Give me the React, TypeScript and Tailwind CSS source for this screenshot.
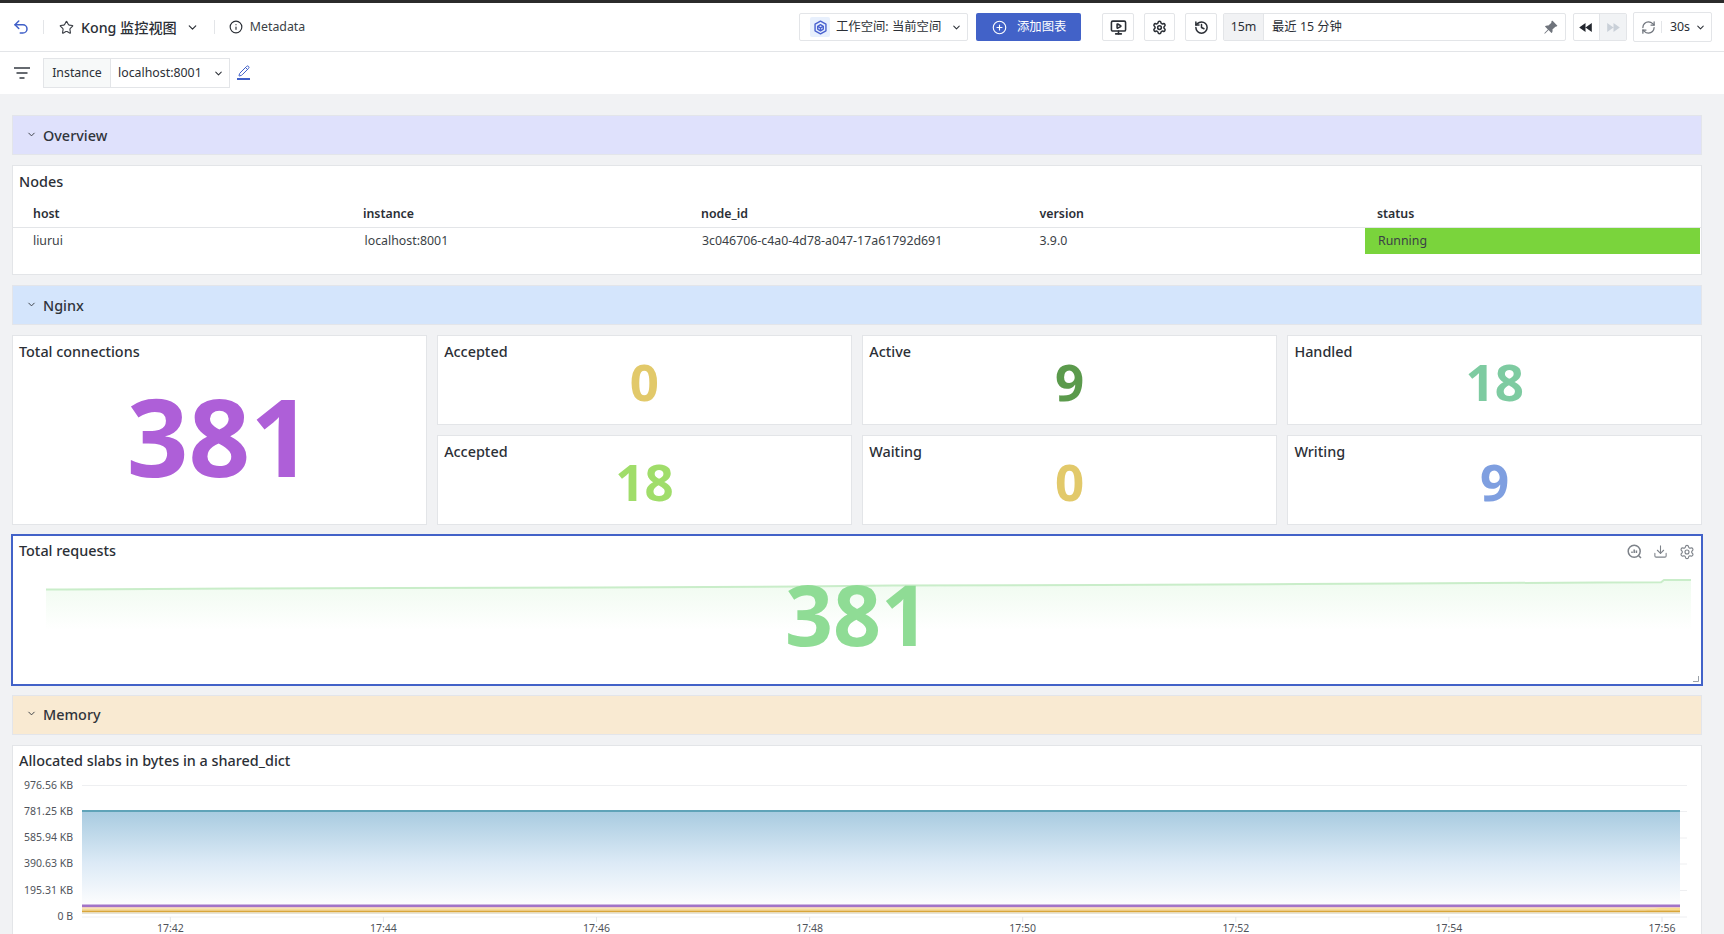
import { ChevronDown, CirclePlus, Download, History, Info, MonitorPlay, Pencil, RefreshCw, Settings, Star, Undo2 } from "lucide-react";
import { BsPinAngleFill } from "react-icons/bs";

const Section = ({ title, color, top }: { title: string; color: string; top: string }) => (
  <div className={`${color} ${top} h-[40px] shrink-0 border border-[#e3e5ea] flex items-center`}>
    <ChevronDown size={11} strokeWidth={2} className="ml-[13px] mb-[2px] text-[#30343b]" />
    <span className="ml-[6px] text-[14.4px] font-medium text-[#30343b]">{title}</span>
  </div>
);

const Stat = ({ title, value, color }: { title: string; value: string; color: string }) => (
  <div className="bg-white border border-[#e3e5e8] pt-[5.5px] pl-[6px]">
    <div className="text-[14.4px] leading-[20px] font-medium text-[#2b2f36]">{title}</div>
    <div className={`${color} -ml-[6px] -mt-[6.5px] text-center text-[51px] leading-[53px] font-bold`}>{value}</div>
  </div>
);

const ticks = [170.3, 383.4, 596.5, 809.6, 1022.7, 1235.8, 1448.9, 1662];
const times = ["17:42", "17:44", "17:46", "17:48", "17:50", "17:52", "17:54", "17:56"];
const yAxis = [
  ["976.56 KB", 786.5],
  ["781.25 KB", 812.5],
  ["585.94 KB", 839],
  ["390.63 KB", 865],
  ["195.31 KB", 891.5],
  ["0 B", 918],
] as const;

export default function App() {
  return (
    <div className="h-screen w-full overflow-hidden flex flex-col bg-[#f1f2f4] font-['Noto_Sans','Noto_Sans_CJK_SC',sans-serif] text-[#2b2f36]">
      <div className="h-[3px] shrink-0 bg-[#2b2b2b]" />
      <header className="h-[49px] shrink-0 bg-white border-b border-[#e3e5e8] flex items-center">
        <Undo2 size={18} strokeWidth={2} className="ml-[12px] text-[#3f5fc8]" />
        <div className="ml-[13px] h-[14px] w-px bg-[#e3e5e8]" />
        <Star size={15} strokeWidth={1.8} className="ml-[15px] text-[#3b3f46]" />
        <span className="ml-[7px] mt-px text-[14.2px] font-medium">Kong 监控视图</span>
        <ChevronDown size={13} strokeWidth={2.2} className="ml-[9px]" />
        <div className="ml-[15px] h-[14px] w-px bg-[#e3e5e8]" />
        <Info size={14} strokeWidth={2} className="ml-[14px]" />
        <span className="ml-[7px] text-[12.35px] text-[#3b3f46]">Metadata</span>

        <div className="ml-auto w-[169px] h-[28px] border border-[#e3e5e8] rounded-[2px] flex items-center">
          <div className="ml-[10px] w-[20px] h-[20px] bg-[#e8f0fd] rounded-[2px] flex items-center justify-center">
            <svg width="15" height="15" viewBox="0 0 16 16" fill="none" stroke="#4a62d0" strokeWidth="1.5" strokeLinejoin="round">
              <path d="M8 1.2l5.8 3.3v7L8 14.8l-5.8-3.3v-7z" />
              <path d="M8 5l3 1.7v3L8 11.5 5 9.7v-3z" />
              <path d="M8 8.4V11.5M5 6.7l3 1.7 3-1.7" />
            </svg>
          </div>
          <span className="ml-[6px] text-[12.35px] whitespace-nowrap">工作空间: 当前空间</span>
          <ChevronDown size={11} strokeWidth={2.2} className="ml-auto mr-[5px]" />
        </div>
        <div className="ml-[8px] w-[105px] h-[28px] bg-[#4262c8] rounded-[2px] flex items-center text-white">
          <CirclePlus size={15} strokeWidth={1.8} className="ml-[16px]" />
          <span className="ml-[10px] text-[12.35px]">添加图表</span>
        </div>
        <div className="ml-[21px] w-[32px] h-[28px] border border-[#e3e5e8] rounded-[2px] flex items-center justify-center">
          <MonitorPlay size={17} strokeWidth={2.2} />
        </div>
        <div className="ml-[10px] w-[31px] h-[28px] border border-[#e3e5e8] rounded-[2px] flex items-center justify-center">
          <Settings size={15} strokeWidth={2.4} />
        </div>
        <div className="ml-[10px] w-[32px] h-[28px] border border-[#e3e5e8] rounded-[2px] flex items-center justify-center">
          <History size={15} strokeWidth={2.4} />
        </div>
        <div className="ml-[6px] w-[343px] h-[28px] border border-[#e3e5e8] rounded-[2px] flex items-center">
          <div className="w-[40px] h-full bg-[#f1f2f4] border-r border-[#e3e5e8] flex items-center justify-center text-[12.35px]">15m</div>
          <span className="ml-[8px] text-[12.35px]">最近 15 分钟</span>
          <BsPinAngleFill size={15} className="ml-auto mr-[7px] text-[#6f747c]" />
        </div>
        <div className="ml-[7px] w-[54px] h-[28px] border border-[#e3e5e8] rounded-[2px] flex items-center">
          <div className="w-[26px] h-full flex items-center justify-center border-r border-[#e3e5e8]">
            <svg width="13" height="9" viewBox="0 0 14 10" fill="#23272e" className="mr-[2px]"><path d="M7 0v10L0 5zM14 0v10L7 5z" /></svg>
          </div>
          <div className="flex-1 h-full bg-[#f1f3f5] flex items-center justify-center">
            <svg width="13" height="9" viewBox="0 0 14 10" fill="#c9d0d8"><path d="M0 0v10l7-5zM7 0v10l7-5z" /></svg>
          </div>
        </div>
        <div className="ml-[6px] mr-[12px] w-[79px] h-[30px] border border-[#e3e5e8] rounded-[2px] flex items-center">
          <RefreshCw size={15} strokeWidth={2} className="ml-[7px] text-[#6f747c]" />
          <div className="ml-[5px] h-[12px] w-px bg-[#e3e5e8]" />
          <span className="ml-[8px] text-[12.35px]">30s</span>
          <ChevronDown size={11} strokeWidth={2.2} className="ml-[5px]" />
        </div>
      </header>

      <div className="h-[42px] shrink-0 bg-white flex items-center">
        <svg width="16" height="13" viewBox="0 0 16 13" fill="#666a70" className="ml-[14px]">
          <rect x="0" y="0" width="16" height="2" /><rect x="2.5" y="5" width="11" height="2" /><rect x="5.5" y="10" width="5" height="2" />
        </svg>
        <div className="ml-[13px] w-[187px] h-[30px] border border-[#e3e5e8] flex items-center text-[12.35px]">
          <div className="w-[67px] h-full bg-[#f7f9f9] border-r border-[#e3e5e8] flex items-center justify-center">Instance</div>
          <span className="ml-[7px]">localhost:8001</span>
          <ChevronDown size={11} strokeWidth={2.2} className="ml-auto mr-[5px]" />
        </div>
        <div className="ml-[7px] mb-[1px] flex flex-col items-center text-[#3f5fc8]">
          <Pencil size={12} strokeWidth={2} />
          <div className="mt-px w-[13px] h-[1.5px] bg-[#3f5fc8]" />
        </div>
      </div>

      <main className="flex-1 min-h-0 overflow-hidden flex flex-col pl-[12px] pr-[22px] pt-[21px]">
        <Section title="Overview" color="bg-[#dfe1fc]" top="pt-px" />
        <div className="mt-[10px] h-[110px] shrink-0 bg-white border border-[#e3e5e8]">
          <div className="pt-[6px] pl-[6px] text-[14.4px] leading-[20px] font-medium">Nodes</div>
          <div className="mt-[9px] grid grid-cols-[339.5px_337.5px_337.5px_337.5px_1fr] text-[12.35px]">
            <div className="h-[27px] flex items-center font-semibold pl-[20px] border-b border-[#e3e5e8]">host</div>
            <div className="h-[27px] flex items-center font-semibold pl-[10.5px] border-b border-[#e3e5e8]">instance</div>
            <div className="h-[27px] flex items-center font-semibold pl-[11px] border-b border-[#e3e5e8]">node_id</div>
            <div className="h-[27px] flex items-center font-semibold pl-[12px] border-b border-[#e3e5e8]">version</div>
            <div className="h-[27px] flex items-center font-semibold pl-[12px] border-b border-[#e3e5e8]">status</div>
            <div className="h-[26px] pt-px flex items-center pl-[20px] text-[#3b3f46]">liurui</div>
            <div className="h-[26px] pt-px flex items-center pl-[12px] text-[#3b3f46]">localhost:8001</div>
            <div className="h-[26px] pt-px flex items-center pl-[12px] text-[#3b3f46]">3c046706-c4a0-4d78-a047-17a61792d691</div>
            <div className="h-[26px] pt-px flex items-center pl-[12px] text-[#3b3f46]">3.9.0</div>
            <div className="h-[26px] pt-px mr-px flex items-center pl-[13px] text-[#3b3f46] bg-[#7ad43c]">Running</div>
          </div>
        </div>
        <Section title="Nginx" color="bg-[#d4e5fc]" top="mt-[10px] pt-px" />
        <div className="mt-[10px] shrink-0 grid grid-cols-4 grid-rows-[89.5px_89.5px] gap-[10.5px]">
          <div className="row-span-2 bg-white border border-[#e3e5e8] pt-[5.5px] pl-[6px]">
            <div className="text-[14.4px] leading-[20px] font-medium">Total connections</div>
            <div className="-ml-[6px] mt-[19px] text-center text-[108px] leading-[109px] font-bold text-[#ae5fd8]">381</div>
          </div>
          <Stat title="Accepted" value="0" color="text-[#e2c96a]" />
          <Stat title="Active" value="9" color="text-[#5b9a4c]" />
          <Stat title="Handled" value="18" color="text-[#7ecba1]" />
          <Stat title="Accepted" value="18" color="text-[#a0dd6a]" />
          <Stat title="Waiting" value="0" color="text-[#e2c96a]" />
          <Stat title="Writing" value="9" color="text-[#7f9fe0]" />
        </div>
        <div className="relative -mx-px mt-[9.5px] h-[152px] shrink-0 bg-white border-2 border-[#4262c8]">
          <svg className="absolute inset-0 w-full h-full" viewBox="13 536 1689 148" preserveAspectRatio="none">
            <defs>
              <linearGradient id="sparkFill" x1="0" y1="0" x2="0" y2="1">
                <stop offset="0" stopColor="#effbef" />
                <stop offset="1" stopColor="#ffffff" />
              </linearGradient>
            </defs>
            <path d="M46 589.5H65L240 588.5 400 588 600 587.5 800 586.5 893 585.5 1100 585 1300 584 1400 583.5 1600 582.5 1662 582.3 1665 580H1692V630H46Z" fill="url(#sparkFill)" />
            <path d="M46 589.5H65L240 588.5 400 588 600 587.5 800 586.5 893 585.5 1100 585 1300 584 1400 583.5 1600 582.5 1662 582.3 1665 580H1692" fill="none" stroke="#c9edc9" strokeWidth="2" />
          </svg>
          <div className="relative pt-[5px] pl-[6px] text-[14.4px] leading-[20px] font-medium">Total requests</div>
          <div className="relative mt-[10px] text-center text-[84px] leading-[85px] font-bold text-[#8fdc95]">381</div>
          <div className="absolute top-[7.5px] right-[6px] flex items-center gap-[11px] text-[#7d8289]">
            <svg width="15" height="15" viewBox="0 0 15 15" fill="none" stroke="currentColor" strokeWidth="1.5">
              <circle cx="7.2" cy="7.2" r="6" />
              <path d="M11.5 11.5l2.5 2.5" />
              <path d="M5 9V7.5M7.2 9V5.5M9.4 9V6.5" />
            </svg>
            <Download size={15} strokeWidth={1.7} />
            <Settings size={16} strokeWidth={1.7} />
          </div>
          <svg className="absolute right-[2px] bottom-[2px]" width="6" height="6" viewBox="0 0 6 6" fill="none" stroke="#9aa0a8" strokeWidth="1">
            <path d="M5.5 0v5.5H0" />
          </svg>
        </div>
        <Section title="Memory" color="bg-[#f9ead2]" top="mt-[8.5px]" />
        <div className="mt-[10.5px] flex-1 min-h-[200px] shrink-0 bg-white border border-[#e3e5e8]">
          <div className="pt-[5px] pl-[6px] text-[14.4px] leading-[20px] font-medium">Allocated slabs in bytes in a shared_dict</div>
          <svg className="block" width="1687" height="170" viewBox="13 772 1687 170">
            <defs>
              <linearGradient id="memFill" x1="0" y1="0" x2="0" y2="1">
                <stop offset="0" stopColor="#a8cbe0" />
                <stop offset="0.55" stopColor="#dceaf6" />
                <stop offset="1" stopColor="#fdfdfe" />
              </linearGradient>
            </defs>
            {yAxis.map(([label, y]) => (
              <g key={label}>
                <path d={`M82 ${y}H1687`} stroke="#eeeff1" strokeWidth="1" />
                <text x="73" y={y + 3} textAnchor="end" fontSize="10.5" fill="#4f535a">{label}</text>
              </g>
            ))}
            <rect x="82" y="812" width="1598" height="94" fill="url(#memFill)" />
            <rect x="82" y="811" width="1598" height="2" fill="#5fa3b8" />
            <rect x="82" y="905.5" width="1598" height="2.5" fill="#a274c8" />
            <rect x="82" y="908" width="1598" height="1.5" fill="#f0cdbb" />
            <rect x="82" y="909.5" width="1598" height="2" fill="#f5dc96" />
            <path d="M1645 911.5L1660 909H1680V911.5Z" fill="#f9dc8e" />
            <rect x="82" y="911.5" width="1598" height="2" fill="#d9a63a" />
            <rect x="82" y="913.5" width="1598" height="1.5" fill="#e6e4d8" />
            {ticks.map((x, i) => (
              <g key={x}>
                <path d={`M${x} 918V923`} stroke="#e3e5e8" strokeWidth="1" />
                <text x={x} y="933" textAnchor="middle" fontSize="10.5" fill="#4f535a">{times[i]}</text>
              </g>
            ))}
          </svg>
        </div>
      </main>
    </div>
  );
}
